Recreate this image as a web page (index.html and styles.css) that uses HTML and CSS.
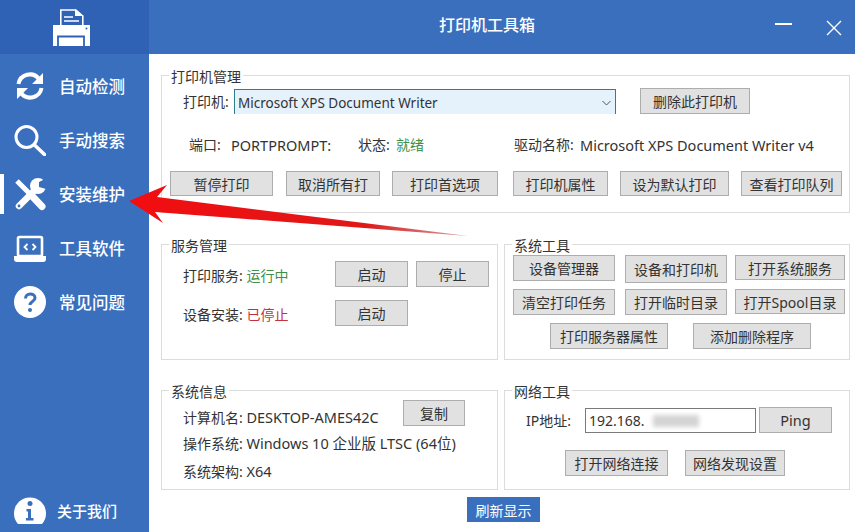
FILE: index.html
```html
<!DOCTYPE html>
<html>
<head>
  <meta charset="utf-8">
  <title>打印机工具箱</title>
  <link rel="stylesheet" href="styles.css">
</head>
<body>
  <div id="app">
    <div class="header">
      <div class="logo">
        <svg width="38" height="38" viewBox="0 0 38 38">
          <path d="M7.800 16.500V1h15l7 6v9.500" fill="none" stroke="#fff" stroke-width="1.600"/>
          <path d="M22 0l8.500 7H22z" fill="#fff"/>
          <path d="M11 8h9M11 12h15" stroke="#fff" stroke-width="1.400"/>
          <path d="M0 16h37v21H0z" fill="#fff"/>
          <path d="M5 37V27.500h26V37" fill="none" stroke="#2f62b5" stroke-width="1.800"/>
          <circle cx="33.500" cy="19.500" r="1" fill="#2f62b5"/>
        </svg>
      </div>
      <div class="title">打印机工具箱</div>
      <div class="window-btns">
        <svg width="17" height="4" viewBox="0 0 17 4"><path d="M0 2h17" stroke="#fff" stroke-width="2"/></svg>
        <svg class="btn-close" width="16" height="16" viewBox="0 0 16 16"><path d="M1 1l14 14M15 1L1 15" stroke="#fff" stroke-width="1.400"/></svg>
      </div>
    </div>
    <div class="content">
      <div class="sidebar">
        <div class="nav-item">
          <svg class="nav-icon" width="32" height="32" viewBox="0 0 32 32">
            <path d="M4.500 14A11.500 11.500 0 0 1 25 9M27.500 18A11.500 11.500 0 0 1 7 23" fill="none" stroke="#fff" stroke-width="4"/>
            <path d="M29 3v11H18zM3 29V18h11z" fill="#fff"/>
          </svg>
          <span>自动检测</span>
        </div>
        <div class="nav-item">
          <svg class="nav-icon" width="32" height="32" viewBox="0 0 32 32">
            <circle cx="12.500" cy="13" r="10.500" fill="none" stroke="#fff" stroke-width="3"/>
            <path d="M20.500 21l10 9.500" stroke="#fff" stroke-width="3.600" stroke-linecap="round"/>
          </svg>
          <span>手动搜索</span>
        </div>
        <div class="nav-item active">
          <svg class="nav-icon" width="32" height="34" viewBox="0 0 32 34">
            <path d="M3 4l6 6M9 10l7 7" stroke="#fff" stroke-width="5"/>
            <path d="M19 20l9 9.500" stroke="#fff" stroke-width="7" stroke-linecap="round"/>
            <path d="M5 29l15-15" stroke="#fff" stroke-width="6.500" stroke-linecap="round"/>
            <circle cx="24" cy="9" r="8" fill="#fff"/>
            <path d="M33 1L25 5v5l7 2z" fill="#3a6fbe"/>
            <circle cx="5" cy="29" r="1.400" fill="#3a6fbe"/>
          </svg>
          <span>安装维护</span>
        </div>
        <div class="nav-item">
          <svg class="nav-icon" width="32" height="27" viewBox="0 0 32 27">
            <rect x="4" y="2" width="24" height="19" rx="1.500" fill="none" stroke="#fff" stroke-width="2.600"/>
            <path d="M0 21h32v3a3 3 0 0 1-3 3H3a3 3 0 0 1-3-3z" fill="#fff"/>
            <path d="M13.500 9l-3 3 3 3M18.500 9l3 3-3 3" fill="none" stroke="#fff" stroke-width="1.800"/>
          </svg>
          <span>工具软件</span>
        </div>
        <div class="nav-item">
          <svg class="nav-icon" width="32" height="32" viewBox="0 0 32 32">
            <circle cx="16" cy="16" r="16" fill="#fff"/>
            <path d="M11.500 12.500c0-6 9.500-6 9.500-.5 0 3.500-5 3.500-5 7" fill="none" stroke="#3a6fbe" stroke-width="3"/>
            <circle cx="16" cy="24" r="2" fill="#3a6fbe"/>
          </svg>
          <span>常见问题</span>
        </div>
        <div class="nav-item about">
          <svg class="nav-icon" width="32" height="30" viewBox="0 0 32 30">
            <path d="M4 29a16 16 0 1 1 24 0z" fill="#fff"/>
            <circle cx="16" cy="8.500" r="2.500" fill="#3a6fbe"/>
            <path d="M12.500 14H17v9h2.500v2.500h-7.500V23H14v-6.500h-1.500z" fill="#3a6fbe"/>
          </svg>
          <span>关于我们</span>
        </div>
      </div>

      <div class="main">
        <fieldset class="group group-printer">
          <legend>打印机管理</legend>
          <div class="printer-row">
            <span class="printer-label">打印机:</span>
            <div class="select">
              <span>Microsoft XPS Document Writer</span>
              <svg width="9" height="6" viewBox="0 0 9 6"><path d="M.5 1l4 4 4-4" fill="none" stroke="#555" stroke-width="1"/></svg>
            </div>
            <button class="btn btn-delete">删除此打印机</button>
          </div>
          <div class="info-row">
            <span class="port-label">端口:</span>
            <span class="port-value latin">PORTPROMPT:</span>
            <span class="state-label">状态:</span>
            <span class="state-value green">就绪</span>
            <span class="driver-label">驱动名称:</span>
            <span class="latin">Microsoft XPS Document Writer v4</span>
          </div>
          <div class="printer-actions">
            <button class="btn">暂停打印</button>
            <button class="btn">取消所有打</button>
            <button class="btn">打印首选项</button>
            <button class="btn">打印机属性</button>
            <button class="btn">设为默认打印</button>
            <button class="btn">查看打印队列</button>
          </div>
        </fieldset>

        <div class="columns">
          <fieldset class="group group-service">
            <legend>服务管理</legend>
            <div class="service-grid">
              <span class="service-label">打印服务: <span class="green">运行中</span></span>
              <button class="btn">启动</button>
              <button class="btn">停止</button>
              <span class="service-label">设备安装: <span class="red">已停止</span></span>
              <button class="btn">启动</button>
            </div>
          </fieldset>

          <fieldset class="group group-tools">
            <legend>系统工具</legend>
            <div class="tools-grid">
              <button class="btn">设备管理器</button>
              <button class="btn btn-tall">设备和打印机</button>
              <button class="btn btn-short">打开系统服务</button>
              <button class="btn">清空打印任务</button>
              <button class="btn">打开临时目录</button>
              <button class="btn btn-short">打开Spool目录</button>
            </div>
            <div class="tools-last">
              <button class="btn">打印服务器属性</button>
              <button class="btn">添加删除程序</button>
            </div>
          </fieldset>
        </div>

        <div class="columns">
          <fieldset class="group group-sysinfo">
            <legend>系统信息</legend>
            <div class="sysinfo-top">
              <span>计算机名: <span class="latin">DESKTOP-AMES42C</span></span>
              <button class="btn btn-copy">复制</button>
            </div>
            <div class="sysinfo-line">操作系统: <span class="latin">Windows 10 企业版 LTSC (64位)</span></div>
            <div class="sysinfo-line last">系统架构: <span class="latin">X64</span></div>
          </fieldset>

          <fieldset class="group group-network">
            <legend>网络工具</legend>
            <div class="ip-row">
              <span class="ip-label">IP地址:</span>
              <div class="ip-input">192.168.<span class="ip-blur"></span></div>
              <button class="btn btn-ping">Ping</button>
            </div>
            <div class="network-actions">
              <button class="btn">打开网络连接</button>
              <button class="btn">网络发现设置</button>
            </div>
          </fieldset>
        </div>

        <div class="footer">
          <button class="btn-refresh">刷新显示</button>
        </div>
      </div>
    </div>

    <svg class="arrow" width="855" height="532" viewBox="0 0 855 532">
      <defs>
        <linearGradient id="arrow-fill" gradientUnits="userSpaceOnUse" x1="129" y1="200" x2="468" y2="236">
          <stop offset="0" stop-color="#f20d10"/>
          <stop offset="0.7" stop-color="#e01818"/>
          <stop offset="1" stop-color="#b03a3a" stop-opacity="0.5"/>
        </linearGradient>
      </defs>
      <path d="M129 201L167 185 157 197 468 236 155 212 163 223z" fill="url(#arrow-fill)"/>
    </svg>
  </div>
</body>
</html>
```

FILE: styles.css
```css
html,
body {
  margin: 0;
  background-color: #fff;
}

#app {
  position: relative;
  width: 855px;
  height: 532px;
  overflow: hidden;
  font-family: "Noto Sans", "Noto Sans CJK SC", sans-serif;
  font-size: 14px;
  color: #333;
}

.latin {
  font-size: 14.5px;
}

.header {
  display: flex;
  height: 54px;
  background-color: #3a6fbe;
  color: #fff;
}

.logo {
  width: 149px;
  padding: 9px 0 0 53px;
  box-sizing: border-box;
  background-color: #2f62b5;
}

.title {
  padding-left: 290px;
  font-size: 16px;
  font-weight: 500;
  line-height: 50px;
}

.window-btns {
  display: flex;
  align-items: center;
  gap: 34px;
  margin-left: auto;
  padding-right: 13px;
  padding-bottom: 6px;
}

.btn-close {
  margin-top: 7px;
}

.content {
  display: flex;
  height: 478px;
}

.sidebar {
  display: flex;
  flex-direction: column;
  width: 149px;
  padding-top: 5px;
  box-sizing: border-box;
  background-color: #3a6fbe;
  color: #fff;
  font-size: 16.5px;
  font-weight: 500;
}

.nav-item {
  display: flex;
  align-items: center;
  height: 54px;
  padding-left: 14px;
}

.nav-item.active {
  background-image: linear-gradient(#fff, #fff);
  background-repeat: no-repeat;
  background-position: left center;
  background-size: 4px 40px;
}

.nav-item.about {
  margin-top: auto;
  height: 44px;
  font-size: 15px;
}

.nav-item.about .nav-icon {
  margin-right: 11px;
}

.nav-icon {
  flex: none;
  margin-right: 13px;
}

.main {
  flex: 1;
  padding: 10px 5px 0 12px;
}

.group {
  margin: 0;
  padding: 0;
  border: 1px solid #dcdcdc;
  box-sizing: border-box;
  min-width: 0;
}

.group legend {
  height: 22px;
  margin-left: 7px;
  padding: 4px 2px 0;
  box-sizing: border-box;
  line-height: 18px;
  color: #333;
}

.btn {
  height: 26px;
  padding: 0;
  border: 1px solid #adadad;
  background-color: #e1e1e1;
  font-family: inherit;
  font-size: 14px;
  color: #333;
}

.green {
  color: #3f8f46;
}

.red {
  color: #c5303f;
}

/* printer group */
.group-printer {
  height: 149px;
  margin-bottom: 20px;
  padding: 2px 7px 0 8px;
}

.group-printer legend {
  margin-left: -1px;
}

.printer-row {
  display: flex;
  align-items: flex-start;
  padding-left: 13px;
}

.printer-label {
  width: 51px;
  line-height: 28px;
}

.select {
  display: flex;
  align-items: center;
  justify-content: space-between;
  width: 382px;
  height: 25px;
  margin-top: 1px;
  padding: 1px 4px 0 3px;
  box-sizing: border-box;
  border: 1px solid #2d7f8c;
  border-bottom: none;
  background-color: #e5f1fb;
  font-size: 13.5px;
}

.btn-delete {
  width: 110px;
  margin-left: 24px;
}

.info-row {
  display: flex;
  height: 26px;
  margin-top: 16px;
  padding-left: 19px;
  line-height: 26px;
}

.port-label {
  width: 42px;
}

.port-value {
  width: 127px;
}

.state-label {
  width: 38px;
}

.state-value {
  width: 118px;
}

.driver-label {
  width: 66px;
}

.printer-actions {
  display: grid;
  grid-template-columns: 103px 95px 106px 98px 109px 101px;
  column-gap: 12px;
  margin-top: 13px;
}

.printer-actions .btn {
  height: 25px;
}

.printer-actions .btn:nth-child(2) {
  margin-left: 1px;
}

.printer-actions .btn:nth-child(4) {
  margin-left: 3px;
}

.columns {
  display: grid;
  grid-template-columns: 337px 346px;
  column-gap: 6px;
}

/* service group */
.group-service,
.group-tools {
  height: 127px;
  margin-bottom: 19px;
}

.service-grid {
  display: grid;
  grid-template-columns: 144px 73px 73px;
  column-gap: 8px;
  row-gap: 11px;
  align-items: start;
  padding: 6px 0 0 21px;
}

.service-label {
  grid-column: 1;
  padding-top: 2px;
  line-height: 26px;
}

/* tools group */
.tools-grid {
  display: grid;
  grid-template-columns: 102px 102px 110px;
  column-gap: 10px;
  row-gap: 8px;
  grid-auto-rows: 26px;
  padding-left: 8px;
}

.btn-tall {
  height: 28px;
}

.btn-short {
  width: 110px;
  height: 25px;
  margin-left: -2px;
}

.tools-last {
  display: flex;
  gap: 25px;
  margin-top: 8px;
  padding-left: 45px;
}

.tools-last .btn {
  width: 118px;
}

/* system info group */
.group-sysinfo,
.group-network {
  height: 111px;
}

.sysinfo-top {
  display: flex;
  align-items: flex-start;
  justify-content: space-between;
  width: 282px;
  padding-left: 21px;
  line-height: 26px;
}

.sysinfo-top > span {
  padding-top: 3px;
}

.btn-copy {
  width: 62px;
  margin-top: -1px;
}

.sysinfo-line {
  margin-top: -1px;
  padding-left: 21px;
  line-height: 26px;
}

.sysinfo-line.last {
  margin-top: 1px;
}

/* network group */
.ip-row {
  display: flex;
  align-items: flex-start;
  padding: 6px 0 0 21px;
}

.ip-label {
  width: 59px;
  line-height: 28px;
}

.ip-input {
  display: flex;
  align-items: center;
  width: 171px;
  height: 25px;
  margin-top: 1px;
  padding-left: 3px;
  box-sizing: border-box;
  border: 1px solid #7a7a7a;
}

.ip-blur {
  width: 46px;
  height: 12px;
  margin-left: 8px;
  background-color: #d4d4d4;
  filter: blur(2px);
}

.btn-ping {
  width: 73px;
  margin-left: 3px;
  font-size: 14.5px;
}

.network-actions {
  display: flex;
  gap: 17px;
  margin-top: 15px;
  padding-left: 60px;
}

.network-actions .btn:first-child {
  width: 103px;
}

.network-actions .btn:last-child {
  width: 100px;
}

.footer {
  display: flex;
  justify-content: center;
  margin-top: 7px;
  padding-right: 4px;
}

.btn-refresh {
  width: 73px;
  height: 25px;
  padding: 0;
  border: none;
  background-color: #3a6fbe;
  font-family: inherit;
  font-size: 14px;
  color: #fff;
}

.arrow {
  position: absolute;
  top: 0;
  left: 0;
  pointer-events: none;
}
```
